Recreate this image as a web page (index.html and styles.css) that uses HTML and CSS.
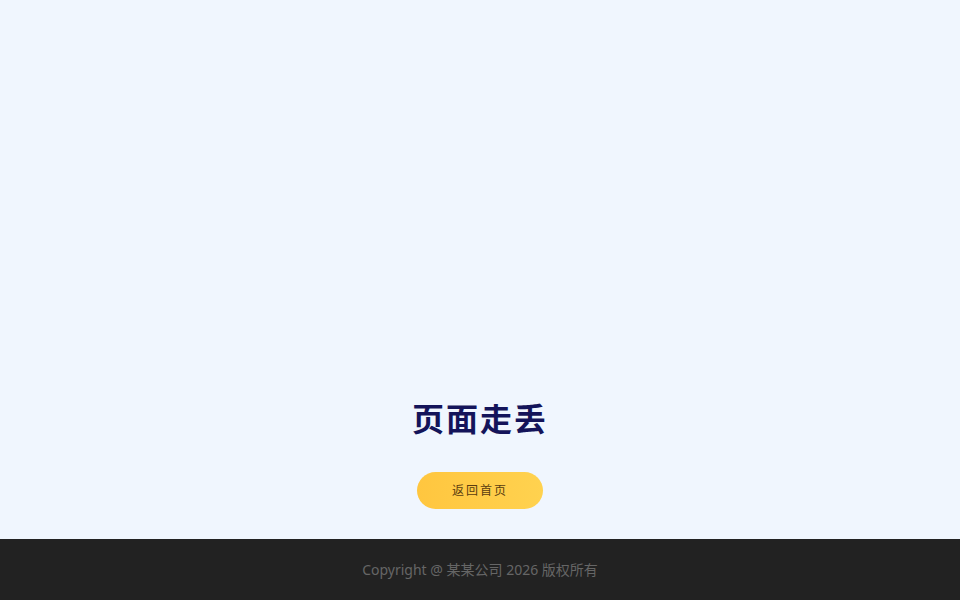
FILE: index.html
```html
<!DOCTYPE html>
<html lang="zh-CN">
<head>
    <meta charset="UTF-8">
    <meta name="viewport" content="width=device-width, initial-scale=1.0">
    <title>页面走丢了</title>
    <link rel="stylesheet" href="styles.css">
</head>
<body>
    <div class="page">
        <div class="content">
            <h1 class="title">页面走丢</h1>
            <a class="home-btn" href="#">返回首页</a>
        </div>
    </div>
    <footer class="footer">Copyright @ 某某公司 2026 版权所有</footer>
</body>
</html>
```
FILE: styles.css
```css
html, body {
    margin: 0;
    padding: 0;
}
body {
    font-family: "Noto Sans", "Noto Sans CJK SC", sans-serif;
    background-color: #f0f6fe;
}
.page {
    height: 539px;
    display: flex;
    flex-direction: column;
    justify-content: flex-end;
    align-items: center;
    padding-bottom: 30px;
    box-sizing: border-box;
}
.content {
    display: flex;
    flex-direction: column;
    align-items: center;
}
.title {
    margin: 0 0 33px;
    font-size: 32px;
    line-height: 40px;
    font-weight: 700;
    color: #14145a;
    letter-spacing: 2px;
}
.home-btn {
    display: block;
    width: 126px;
    height: 37px;
    line-height: 37px;
    text-align: center;
    border-radius: 19px;
    background: linear-gradient(90deg, #ffc63f, #ffd24f);
    color: #5a3d10;
    font-size: 12px;
    letter-spacing: 2px;
    text-decoration: none;
}
.footer {
    height: 61px;
    line-height: 61px;
    background-color: #222222;
    color: #666666;
    font-size: 14px;
    text-align: center;
}
```
